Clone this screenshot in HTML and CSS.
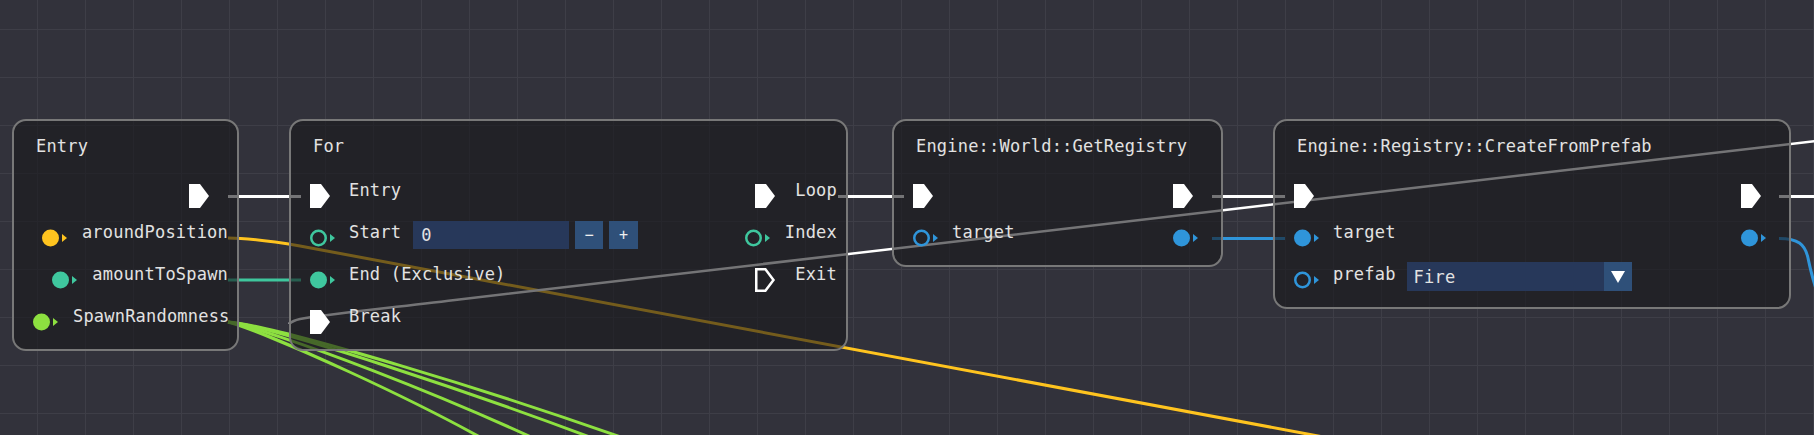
FILE: index.html
```html
<!DOCTYPE html>
<html>
<head>
<meta charset="utf-8">
<title>Node Graph</title>
<link rel="stylesheet" href="styles.css">
</head>
<body>
<div class="canvas">
  <svg class="links" width="1814" height="435" viewBox="0 0 1814 435">
    <path class="w" d="M228 196.5H301"/>
    <path class="w" d="M838 196.5H904"/>
    <path class="w" d="M1212 196.5H1285"/>
    <path class="w" d="M1779 196.5H1820"/>
    <path class="y" d="M228 238C250 238 270 241 300 246L1420 455"/>
    <path class="t" d="M228 280H301"/>
    <path class="g" d="M228 322C260 330 420 400 520 460"/>
    <path class="g" d="M228 322C265 328 450 395 600 470"/>
    <path class="g" d="M228 322C270 326 470 390 650 460"/>
    <path class="g" d="M228 322C270 325 490 388 690 462"/>
    <path class="b" d="M1212 238.5H1285"/>
    <path class="b" d="M1779 238.5C1798 238.5 1805 244 1808 258S1815 292 1830 322"/>
    <path class="w thin" d="M1820 140.5L455 300C380 309 320 315 300 319Q293 320.5 289 324"/>
  </svg>

  <div class="node node-entry">
    <div class="title">Entry</div>
    <div class="row">
      <div class="out">
        <svg class="pin bare white" width="26" height="26" viewBox="0 0 26 26"><path d="M0 1H11L20 13L11 25H0Z"/></svg>
      </div>
    </div>
    <div class="row">
      <div class="out">
        <svg class="pin yellow" width="26" height="18" viewBox="0 0 26 18"><circle cx="8.5" cy="9" r="8.5"/><path d="M20 5L25 9L20 13Z"/></svg>
        <span class="label">aroundPosition</span>
      </div>
    </div>
    <div class="row">
      <div class="out">
        <svg class="pin teal" width="26" height="18" viewBox="0 0 26 18"><circle cx="8.5" cy="9" r="8.5"/><path d="M20 5L25 9L20 13Z"/></svg>
        <span class="label">amountToSpawn</span>
      </div>
    </div>
    <div class="row">
      <div class="out">
        <svg class="pin green" width="26" height="18" viewBox="0 0 26 18"><circle cx="8.5" cy="9" r="8.5"/><path d="M20 5L25 9L20 13Z"/></svg>
        <span class="label">SpawnRandomness</span>
      </div>
    </div>
  </div>

  <div class="node node-for">
    <div class="title">For</div>
    <div class="row">
      <div class="in">
        <svg class="pin white" width="26" height="26" viewBox="0 0 26 26"><path d="M0 1H11L20 13L11 25H0Z"/></svg>
        <span class="label">Entry</span>
      </div>
      <div class="out">
        <svg class="pin white" width="26" height="26" viewBox="0 0 26 26"><path d="M0 1H11L20 13L11 25H0Z"/></svg>
        <span class="label">Loop</span>
      </div>
    </div>
    <div class="row">
      <div class="in">
        <svg class="pin teal" width="26" height="18" viewBox="0 0 26 18"><circle class="hollow" cx="8.5" cy="9" r="7.25"/><path d="M20 5L25 9L20 13Z"/></svg>
        <span class="label">Start</span>
        <div class="field">
          <div class="num">0</div>
          <div class="btn">−</div>
          <div class="btn plus">+</div>
        </div>
      </div>
      <div class="out">
        <svg class="pin teal" width="26" height="18" viewBox="0 0 26 18"><circle class="hollow" cx="8.5" cy="9" r="7.25"/><path d="M20 5L25 9L20 13Z"/></svg>
        <span class="label">Index</span>
      </div>
    </div>
    <div class="row">
      <div class="in">
        <svg class="pin teal" width="26" height="18" viewBox="0 0 26 18"><circle cx="8.5" cy="9" r="8.5"/><path d="M20 5L25 9L20 13Z"/></svg>
        <span class="label">End (Exclusive)</span>
      </div>
      <div class="out">
        <svg class="pin white" width="26" height="26" viewBox="0 0 26 26"><path class="hollow" d="M1.25 2.25H10.4L18.5 13L10.4 23.75H1.25Z"/></svg>
        <span class="label">Exit</span>
      </div>
    </div>
    <div class="row">
      <div class="in">
        <svg class="pin white" width="26" height="26" viewBox="0 0 26 26"><path d="M0 1H11L20 13L11 25H0Z"/></svg>
        <span class="label">Break</span>
      </div>
    </div>
  </div>

  <div class="node node-world">
    <div class="title">Engine::World::GetRegistry</div>
    <div class="row">
      <div class="in">
        <svg class="pin white" width="26" height="26" viewBox="0 0 26 26"><path d="M0 1H11L20 13L11 25H0Z"/></svg>
      </div>
      <div class="out">
        <svg class="pin bare white" width="26" height="26" viewBox="0 0 26 26"><path d="M0 1H11L20 13L11 25H0Z"/></svg>
      </div>
    </div>
    <div class="row">
      <div class="in">
        <svg class="pin blue" width="26" height="18" viewBox="0 0 26 18"><circle class="hollow" cx="8.5" cy="9" r="7.25"/><path d="M20 5L25 9L20 13Z"/></svg>
        <span class="label">target</span>
      </div>
      <div class="out">
        <svg class="pin bare blue" width="26" height="18" viewBox="0 0 26 18"><circle cx="8.5" cy="9" r="8.5"/><path d="M20 5L25 9L20 13Z"/></svg>
      </div>
    </div>
  </div>

  <div class="node node-prefab">
    <div class="title">Engine::Registry::CreateFromPrefab</div>
    <div class="row">
      <div class="in">
        <svg class="pin white" width="26" height="26" viewBox="0 0 26 26"><path d="M0 1H11L20 13L11 25H0Z"/></svg>
      </div>
      <div class="out">
        <svg class="pin bare white" width="26" height="26" viewBox="0 0 26 26"><path d="M0 1H11L20 13L11 25H0Z"/></svg>
      </div>
    </div>
    <div class="row">
      <div class="in">
        <svg class="pin blue" width="26" height="18" viewBox="0 0 26 18"><circle cx="8.5" cy="9" r="8.5"/><path d="M20 5L25 9L20 13Z"/></svg>
        <span class="label">target</span>
      </div>
      <div class="out">
        <svg class="pin bare blue" width="26" height="18" viewBox="0 0 26 18"><circle cx="8.5" cy="9" r="8.5"/><path d="M20 5L25 9L20 13Z"/></svg>
      </div>
    </div>
    <div class="row">
      <div class="in">
        <svg class="pin blue" width="26" height="18" viewBox="0 0 26 18"><circle class="hollow" cx="8.5" cy="9" r="7.25"/><path d="M20 5L25 9L20 13Z"/></svg>
        <span class="label">prefab</span>
        <div class="combo">
          <div class="combo-text">Fire</div>
          <div class="combo-arrow"><svg width="14" height="12" viewBox="0 0 14 12"><path d="M0 0H14L7 12Z"/></svg></div>
        </div>
      </div>
    </div>
  </div>
</div>
</body>
</html>
```

FILE: styles.css
```css
* { box-sizing: border-box; }

html, body {
  margin: 0;
  padding: 0;
  background: #32323b;
}

body {
  font-family: "DejaVu Sans Mono", "Liberation Mono", monospace;
  font-size: 17px;
  letter-spacing: 0.2px;
  color: #e2e2e2;
}

.canvas {
  position: relative;
  width: 1814px;
  height: 435px;
  overflow: hidden;
  background-color: #32323b;
  background-image:
    linear-gradient(to right, #3e3e47 1px, transparent 1px),
    linear-gradient(to bottom, #3e3e47 1px, transparent 1px);
  background-size: 48px 48px;
  background-position: 37px 29px;
}

.links {
  position: absolute;
  left: 0;
  top: 0;
}

.links path {
  fill: none;
  stroke-width: 3;
}

.links .w { stroke: #ffffff; }
.links .thin { stroke-width: 2.5; }
.links .y { stroke: #ffc41f; }
.links .t { stroke: #3fc79e; }
.links .g { stroke: #8de040; }
.links .b { stroke: #2f95da; }

.node {
  position: absolute;
  top: 119px;
  border: 2px solid #787878;
  border-radius: 14px;
  background: rgba(24, 24, 26, 0.6);
  padding: 15px 9px 6px 19px;
}

.node-entry { left: 12px; width: 227px; }
.node-for { left: 289px; width: 559px; }
.node-world { left: 892px; width: 331px; }
.node-prefab { left: 1273px; width: 518px; }

.title {
  height: 20px;
  line-height: 20px;
  padding-left: 3px;
  margin-bottom: 19px;
  white-space: nowrap;
}

.row {
  display: flex;
  align-items: center;
  height: 42px;
}

.in, .out {
  display: flex;
  align-items: center;
}

.out { margin-left: auto; }

.pin {
  display: block;
  flex: none;
  fill: currentColor;
}

.pin .hollow {
  fill: none;
  stroke: currentColor;
  stroke-width: 2.5;
}

.white { color: #ffffff; }
.yellow { color: #ffc41f; }
.teal { color: #3fc79e; }
.green { color: #8de040; }
.blue { color: #2f95da; }

.out .pin.bare { margin-right: 13px; }

.label {
  line-height: 20px;
  margin-bottom: 12px;
  white-space: nowrap;
}

.in .label { margin-left: 13px; }
.out .label { margin-left: 14px; }

.field {
  display: flex;
  gap: 6px;
  height: 28px;
  margin-left: 12px;
  margin-bottom: 6px;
}

.num {
  width: 156px;
  background: #27385a;
  line-height: 28px;
  padding-left: 8px;
}

.btn {
  width: 28px;
  background: #2f5079;
  display: flex;
  align-items: center;
  justify-content: center;
  font-size: 15px;
  color: #f0f0f0;
}

.btn.plus { width: 29px; }

.combo {
  display: flex;
  width: 225px;
  height: 29px;
  margin-left: 11px;
  margin-bottom: 7px;
  background: #27385a;
}

.combo-text {
  flex: 1;
  line-height: 30px;
  padding-left: 7px;
}

.combo-arrow {
  width: 28px;
  background: #2f5079;
  display: flex;
  align-items: center;
  justify-content: center;
  fill: #ffffff;
}

.combo-arrow svg { display: block; }
```
